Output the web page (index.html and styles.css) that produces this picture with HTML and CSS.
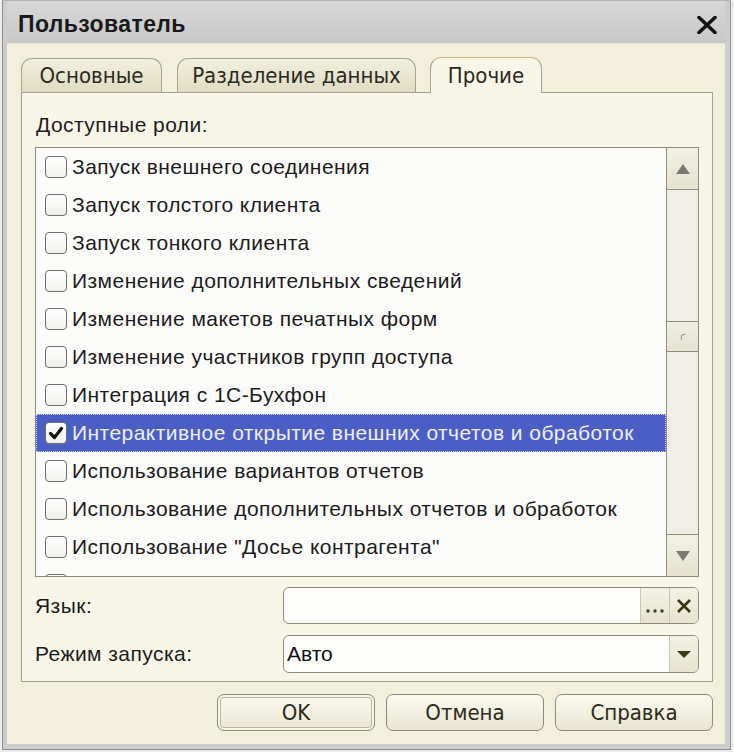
FILE: index.html
```html
<!DOCTYPE html>
<html lang="ru">
<head>
<meta charset="utf-8">
<title>Пользователь</title>
<link rel="stylesheet" href="styles.css">
</head>
<body>
<div class="window">
  <div class="titlebar">
    <span class="title">Пользователь</span>
    <svg class="close" width="20" height="18" viewBox="0 0 20 18"><path d="M2 1.5 L18 16.5 M18 1.5 L2 16.5" stroke="#141414" stroke-width="3.6" stroke-linecap="round"/></svg>
  </div>
  <div class="body">
    <div class="tabs">
      <div class="tab tab-main">Основные</div>
      <div class="tab tab-data">Разделение данных</div>
      <div class="tab tab-other active">Прочие</div>
    </div>
    <div class="panel">
      <div class="label">Доступные роли:</div>
      <div class="listbox">
        <div class="list">
          <div class="row"><span class="cb"></span><span class="txt">Запуск внешнего соединения</span></div>
          <div class="row"><span class="cb"></span><span class="txt">Запуск толстого клиента</span></div>
          <div class="row"><span class="cb"></span><span class="txt">Запуск тонкого клиента</span></div>
          <div class="row"><span class="cb"></span><span class="txt">Изменение дополнительных сведений</span></div>
          <div class="row"><span class="cb"></span><span class="txt">Изменение макетов печатных форм</span></div>
          <div class="row"><span class="cb"></span><span class="txt">Изменение участников групп доступа</span></div>
          <div class="row"><span class="cb"></span><span class="txt">Интеграция с 1С-Бухфон</span></div>
          <div class="row selected"><span class="cb"><svg width="20" height="20" viewBox="0 0 20 20"><path d="M4.5 10.5 L8.5 14.5 L15.5 5.5" fill="none" stroke="#111" stroke-width="3.2" stroke-linecap="round" stroke-linejoin="round"/></svg></span><span class="txt">Интерактивное открытие внешних отчетов и обработок</span></div>
          <div class="row"><span class="cb"></span><span class="txt">Использование вариантов отчетов</span></div>
          <div class="row"><span class="cb"></span><span class="txt">Использование дополнительных отчетов и обработок</span></div>
          <div class="row"><span class="cb"></span><span class="txt">Использование "Досье контрагента"</span></div>
          <div class="row"><span class="cb"></span><span class="txt"></span></div>
        </div>
        <div class="scroll">
          <div class="sbtn sbtn-up"><svg width="16" height="12" viewBox="0 0 16 12"><path d="M8 1 L15 11 L1 11 Z" fill="#7a7a72"/></svg></div>
          <div class="track">
            <div class="thumb"><svg width="10" height="10" viewBox="0 0 10 10"><path d="M7.5 2.5 C4 1.5 2.5 4.5 3.5 8" fill="none" stroke="#9a9a90" stroke-width="1.2"/></svg></div>
          </div>
          <div class="sbtn sbtn-down"><svg width="16" height="12" viewBox="0 0 16 12"><path d="M1 1 L15 1 L8 11 Z" fill="#7a7a72"/></svg></div>
        </div>
      </div>
      <div class="field field-lang">
        <span class="flabel">Язык:</span>
        <div class="input">
          <span class="ivalue"></span>
          <span class="ibtn ibtn-dots"><svg width="20" height="6" viewBox="0 0 20 6"><circle cx="3" cy="3" r="1.7" fill="#3d3b18"/><circle cx="10" cy="3" r="1.7" fill="#3d3b18"/><circle cx="17" cy="3" r="1.7" fill="#3d3b18"/></svg></span>
          <span class="ibtn"><svg width="16" height="16" viewBox="0 0 16 16"><path d="M2 2 L14 14 M14 2 L2 14" stroke="#3a3814" stroke-width="2.6"/></svg></span>
        </div>
      </div>
      <div class="field field-mode">
        <span class="flabel">Режим запуска:</span>
        <div class="input">
          <span class="ivalue">Авто</span>
          <span class="ibtn"><svg width="16" height="9" viewBox="0 0 16 9"><path d="M1 1 L15 1 L8 8 Z" fill="#3d3b18"/></svg></span>
        </div>
      </div>
    </div>
    <div class="buttons">
      <div class="btn btn-default">OK</div>
      <div class="btn">Отмена</div>
      <div class="btn">Справка</div>
    </div>
  </div>
</div>
</body>
</html>
```
FILE: styles.css
```css
* { box-sizing: border-box; }
html, body { margin: 0; padding: 0; }
body {
  background: #ededed;
  font-family: "Liberation Sans", Arial, sans-serif;
  width: 734px;
  height: 752px;
  overflow: hidden;
  color: #1c1c1c;
}
.window {
  margin-left: 2px;
  width: 729px;
  height: 750px;
  border: 1px solid #8e8e8e;
  border-top-color: #b4b4b4;
  background: #cdcdcd;
  padding: 0 5px 5px 4px;
  display: flex;
  flex-direction: column;
}
.titlebar {
  height: 42px;
  flex: none;
  display: flex;
  align-items: center;
  justify-content: space-between;
  padding: 5px 8px 0 11px;
  background: linear-gradient(#d8d8d8, #c8c8c8);
}
.title {
  font-weight: bold;
  font-size: 23px;
  letter-spacing: 0.4px;
  color: #1a1a1a;
}
.body {
  flex: 1;
  background: #f2f0dd;
  padding: 14px 12px 0 14px;
  display: flex;
  flex-direction: column;
  border-top: 1px solid #e6e4d2;
}
.tabs {
  display: flex;
  align-items: flex-end;
  height: 34px;
  flex: none;
}
.tab {
  height: 34px;
  border: 1px solid #a6a48d;
  border-bottom: none;
  border-radius: 11px 11px 0 0;
  background: linear-gradient(#f2f0df, #e0dcc2);
  display: flex;
  align-items: center;
  justify-content: center;
  font-family: "Liberation Sans Narrow", "DejaVu Sans Condensed", sans-serif;
  font-size: 22px;
  color: #2a2a22;
}
.tab-main { width: 141px; }
.tab-data { width: 239px; margin-left: 15px; }
.tab-other { width: 112px; margin-left: 14px; }
.tab.active {
  height: 36px;
  margin-bottom: -1px;
  position: relative;
  z-index: 1;
  background: #f8f6e9;
  border-top-color: #cdbb7a;
}
.panel {
  height: 590px;
  flex: none;
  border: 1px solid #a3a18a;
  background: #f8f6e8;
  padding: 0 13px;
  display: flex;
  flex-direction: column;
}
.label {
  margin-top: 20px;
  height: 24px;
  line-height: 24px;
  font-size: 21px;
  letter-spacing: 0.45px;
  padding-left: 1px;
}
.listbox {
  margin-top: 10px;
  height: 430px;
  flex: none;
  border: 1px solid #8f8d7b;
  background: #fbfbf9;
  display: flex;
}
.list {
  flex: 1;
  overflow: hidden;
}
.row {
  height: 38px;
  display: flex;
  align-items: center;
  padding-left: 9px;
  font-size: 21px;
  letter-spacing: 0.45px;
  white-space: nowrap;
}
.row.selected {
  background: #4b5ec6;
  color: #eef0ff;
  outline: 1px dotted #c8d0f4;
  outline-offset: -1px;
}
.cb {
  width: 22px;
  height: 22px;
  flex: none;
  border: 1px solid #6e6e6a;
  border-radius: 4px;
  background: linear-gradient(#ffffff, #f0f0ec);
  margin-right: 5px;
  display: flex;
  align-items: center;
  justify-content: center;
}
.scroll {
  width: 32px;
  flex: none;
  border-left: 1px solid #8f8d7b;
  background: #f0efe7;
  display: flex;
  flex-direction: column;
}
.sbtn {
  height: 42px;
  flex: none;
  display: flex;
  align-items: center;
  justify-content: center;
  background: linear-gradient(#f3f1e3, #e5e2cf);
}
.sbtn-up { border-bottom: 1px solid #8f8d7b; }
.sbtn-down { border-top: 1px solid #8f8d7b; }
.track {
  flex: 1;
  display: flex;
  flex-direction: column;
}
.thumb {
  margin-top: 131px;
  height: 31px;
  border-top: 1px solid #8f8d7b;
  border-bottom: 1px solid #8f8d7b;
  background: linear-gradient(#f1efe2, #e6e3d1);
  display: flex;
  align-items: center;
  justify-content: center;
}
.field {
  display: flex;
  align-items: center;
  flex: none;
}
.field-lang { margin-top: 10px; height: 37px; }
.field-mode { margin-top: 11px; height: 38px; }
.flabel {
  width: 248px;
  flex: none;
  font-size: 21px;
  letter-spacing: 0.45px;
}
.input {
  flex: 1;
  height: 100%;
  border: 1px solid #8f8d78;
  border-radius: 6px;
  background: #fdfdfb;
  display: flex;
  overflow: hidden;
}
.ivalue {
  flex: 1;
  display: flex;
  align-items: center;
  padding-left: 3px;
  font-size: 21px;
  color: #111;
}
.ibtn {
  width: 29px;
  flex: none;
  border-left: 1px solid #c9c7b0;
  background: linear-gradient(#f4f2e4, #e6e3cf);
  display: flex;
  align-items: center;
  justify-content: center;
}
.ibtn-dots {
  align-items: flex-end;
  padding-bottom: 9px;
}
.buttons {
  margin-top: 12px;
  display: flex;
  justify-content: flex-end;
  gap: 11px;
}
.btn {
  width: 158px;
  height: 37px;
  border: 1px solid #8d8b74;
  border-radius: 7px;
  background: linear-gradient(#fbfaf1, #e9e6d0);
  display: flex;
  align-items: center;
  justify-content: center;
  font-family: "Liberation Sans Narrow", "DejaVu Sans Condensed", sans-serif;
  font-size: 22px;
  color: #2b2a1c;
}
.btn-default {
  box-shadow: inset 0 0 0 2px #f6f5ea, inset 0 0 0 3px #b9b79e;
}
```
